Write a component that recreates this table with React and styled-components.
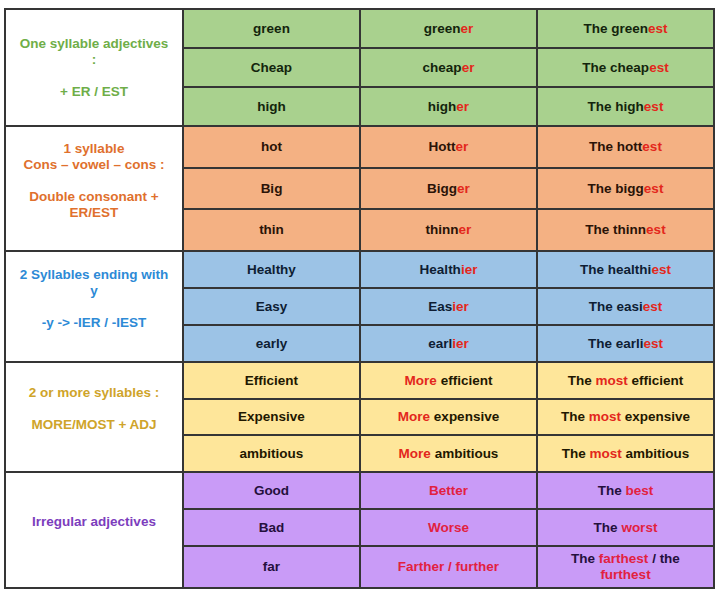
import React from 'react';
import styled, { createGlobalStyle } from 'styled-components';

const GlobalStyle = createGlobalStyle`
    html, body {
        margin: 0;
        padding: 0;
        background: #ffffff;
    }
    body {
        font-family: 'Liberation Sans', Arial, sans-serif;
    }
`;

const Page = styled.div`
    padding: 8px 0 0 4px;
    width: 720px;
    height: 594px;
    box-sizing: border-box;
`;

const Table = styled.table`
    width: 709px;
    border-collapse: collapse;
    table-layout: fixed;
    border: 2px solid #4a4a4a;
`;

const Col = styled.col`
    width: ${(p) => p.$w}px;
`;

const Row = styled.tr`
    height: ${(p) => p.$h}px;
`;

const Cell = styled.td`
    border: 2px solid #353535;
    background: ${(p) => p.$bg};
    color: ${(p) => p.$ink};
    font-size: 13.5px;
    font-weight: bold;
    line-height: 16px;
    text-align: center;
    vertical-align: middle;
    padding: 0 6px;
`;

const LabelCell = styled.td`
    border: 2px solid #353535;
    background: #ffffff;
    color: ${(p) => p.$color};
    font-size: 13.5px;
    font-weight: bold;
    line-height: 16px;
    text-align: center;
    vertical-align: middle;
    padding: 0 8px;
`;

const Line = styled.div`
    height: 16px;
    white-space: nowrap;
`;

const Hi = styled.span`
    color: ${(p) => p.$red};
`;

const widths = [178, 177, 177, 177];

const groups = [
    {
        bg: '#a9d18e',
        ink: '#13240c',
        label: '#6fae48',
        red: '#e3271c',
        lines: ['One syllable adjectives', ':', '', '+ ER / EST'],
        heights: [39, 39, 39],
        rows: [
            ['green', ['green', 'er'], ['The green', 'est']],
            ['Cheap', ['cheap', 'er'], ['The cheap', 'est']],
            ['high', ['high', 'er'], ['The high', 'est']],
        ],
    },
    {
        bg: '#f4b183',
        ink: '#2a1307',
        label: '#e0702d',
        red: '#e3271c',
        lines: ['1 syllable', 'Cons \u2013 vowel \u2013 cons :', '', 'Double consonant +', 'ER/EST', ''],
        heights: [42, 41, 42],
        rows: [
            ['hot', ['Hott', 'er'], ['The hott', 'est']],
            ['Big', ['Bigg', 'er'], ['The bigg', 'est']],
            ['thin', ['thinn', 'er'], ['The thinn', 'est']],
        ],
    },
    {
        bg: '#9cc3e6',
        ink: '#0e1d33',
        label: '#2d8ad6',
        red: '#e3271c',
        lines: ['2 Syllables ending with', 'y', '', '-y -> -IER / -IEST', ''],
        heights: [37, 37, 37],
        rows: [
            ['Healthy', ['Health', 'ier'], ['The healthi', 'est']],
            ['Easy', ['Eas', 'ier'], ['The easi', 'est']],
            ['early', ['earl', 'ier'], ['The earli', 'est']],
        ],
    },
    {
        bg: '#fee69a',
        ink: '#1f1800',
        label: '#cfa42a',
        red: '#e3271c',
        lines: ['2 or more syllables :', '', 'MORE/MOST + ADJ', ''],
        heights: [37, 36, 37],
        rows: [
            ['Efficient', ['', 'More', ' efficient'], ['The ', 'most', ' efficient']],
            ['Expensive', ['', 'More', ' expensive'], ['The ', 'most', ' expensive']],
            ['ambitious', ['', 'More', ' ambitious'], ['The ', 'most', ' ambitious']],
        ],
    },
    {
        bg: '#c99bf7',
        ink: '#24103d',
        label: '#7c3dbd',
        red: '#e2213f',
        lines: ['Irregular adjectives', ''],
        heights: [37, 37, 42],
        rows: [
            ['Good', ['', 'Better'], ['The ', 'best']],
            ['Bad', ['', 'Worse'], ['The ', 'worst']],
            ['far', ['', 'Farther / further'], ['The ', 'farthest', ' / the', '\n', 'furthest']],
        ],
    },
];

// parts alternate plain / red, starting with plain; '\n' is a line break
const Forms = ({ parts, red }) => {
    let idx = 0;
    return (
        <>
            {parts.map((part, i) => {
                if (part === '\n') return <br key={i} />;
                const isRed = idx % 2 === 1;
                idx += 1;
                return isRed ? <Hi key={i} $red={red}>{part}</Hi> : <span key={i}>{part}</span>;
            })}
        </>
    );
};

const App = () => (
    <Page>
        <GlobalStyle />
        <Table>
            <colgroup>
                {widths.map((w, i) => (
                    <Col key={i} $w={w} />
                ))}
            </colgroup>
            <tbody>
                {groups.map((g, gi) =>
                    g.rows.map((row, ri) => (
                        <Row key={`${gi}-${ri}`} $h={g.heights[ri]}>
                            {ri === 0 && (
                                <LabelCell rowSpan={3} $color={g.label}>
                                    {g.lines.map((l, li) => (
                                        <Line key={li}>{l}</Line>
                                    ))}
                                </LabelCell>
                            )}
                            <Cell $bg={g.bg} $ink={g.ink}>{row[0]}</Cell>
                            <Cell $bg={g.bg} $ink={g.ink}>
                                <Forms parts={row[1]} red={g.red} />
                            </Cell>
                            <Cell $bg={g.bg} $ink={g.ink}>
                                <Forms parts={row[2]} red={g.red} />
                            </Cell>
                        </Row>
                    ))
                )}
            </tbody>
        </Table>
    </Page>
);

export default App;
